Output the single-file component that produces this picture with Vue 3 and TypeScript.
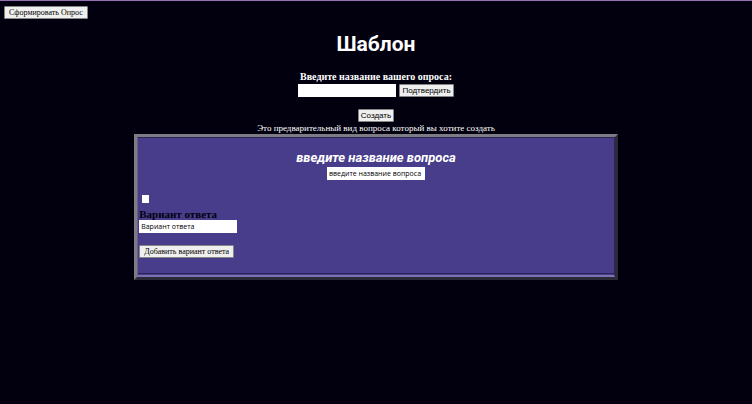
<script setup lang="ts">
import { ref } from 'vue'

const surveyName = ref('')
const questionName = ref('введите название вопроса')
const answer = ref('Вариант ответа')
const checked = ref(false)
</script>

<template>
  <div class="page">
    <button type="button" class="btn serif">Сформировать Опрос</button>
    <main class="content">
      <h1>Шаблон</h1>
      <label class="survey-label" for="survey-name">Введите название вашего опроса:</label>
      <div class="row">
        <input id="survey-name" v-model="surveyName" class="field" type="text" />
        <button type="button" class="btn">Подтвердить</button>
      </div>
      <button type="button" class="btn create">Создать</button>
      <p class="hint">Это предварительный вид вопроса который вы хотите создать</p>
      <section class="preview">
        <div class="question">
          <label class="question-label" for="question-name">введите название вопроса</label>
          <input id="question-name" v-model="questionName" class="field" type="text" />
          <div class="answer">
            <input v-model="checked" class="tick" type="checkbox" aria-labelledby="answer-label" />
            <label id="answer-label" class="answer-label" for="answer-name">Вариант ответа</label>
            <input id="answer-name" v-model="answer" class="field" type="text" />
            <button type="button" class="btn serif add">Добавить вариант ответа</button>
          </div>
        </div>
      </section>
    </main>
  </div>
</template>

<style>
body {
  background: #02000f;
}
</style>

<style scoped>
.page {
  box-sizing: border-box;
  min-height: 100vh;
  border-top: 1px solid #9370b4;
  padding: 5px 4px;
  color: #fff;
  font-family: "Liberation Serif", serif;
}
.btn,
.field {
  display: block;
  box-sizing: border-box;
  height: 13px;
  margin: 0;
  font-family: "Liberation Sans", sans-serif;
  font-size: 8px;
  line-height: 11px;
  color: #000;
}
.btn {
  padding: 0 2px;
  border: 1px solid #858585;
  border-radius: 1px;
  background: #efefef;
}
.serif {
  padding: 0 4px;
  font-family: "Liberation Serif", serif;
}
.field {
  width: 98px;
  padding: 0 1px;
  border: 1px solid #fff;
  background: #fff;
  font-family: "Open Sans", sans-serif;
  font-size: 7px;
}
.content {
  display: flex;
  flex-direction: column;
  align-items: center;
}
h1 {
  margin: 11px 0;
  font-family: Roboto, sans-serif;
  font-size: 21px;
  font-weight: 700;
  line-height: 28px;
}
.survey-label {
  font-size: 10px;
  font-weight: 700;
  line-height: 15px;
}
.row {
  display: flex;
  gap: 3px;
}
.create {
  margin-top: 12px;
}
.hint {
  margin: 0;
  font-size: 9px;
  line-height: 12px;
}
.preview {
  box-sizing: border-box;
  width: 65%;
  border: 3px solid;
  border-color: #7d7b84 #2d2a38 #2d2a38 #7d7b84;
  background: #483d8b;
}
.question {
  display: flex;
  flex-direction: column;
  align-items: center;
  border: 1px solid;
  border-width: 1px 1px 2px;
  border-color: #2b2458 #2b2458 #7c73b2 #665f8c;
  padding: 11px 1px 1px;
}
.question-label {
  font-family: Roboto, sans-serif;
  font-size: 13px;
  font-style: italic;
  font-weight: 700;
  line-height: 18px;
}
.answer {
  display: flex;
  flex-direction: column;
  align-items: flex-start;
  align-self: stretch;
  margin: 15px -1px 0;
  padding: 0 1px 15px;
  border-bottom: 1px solid #2b2458;
}
.tick {
  appearance: none;
  width: 7px;
  height: 8px;
  margin: 0 3px 5px;
  background: #fff;
}
.tick:checked {
  background: #0075ff;
}
.answer-label {
  color: #02000f;
  font-size: 11px;
  font-weight: 700;
  line-height: 12px;
}
.add {
  margin-top: 12px;
}
</style>
